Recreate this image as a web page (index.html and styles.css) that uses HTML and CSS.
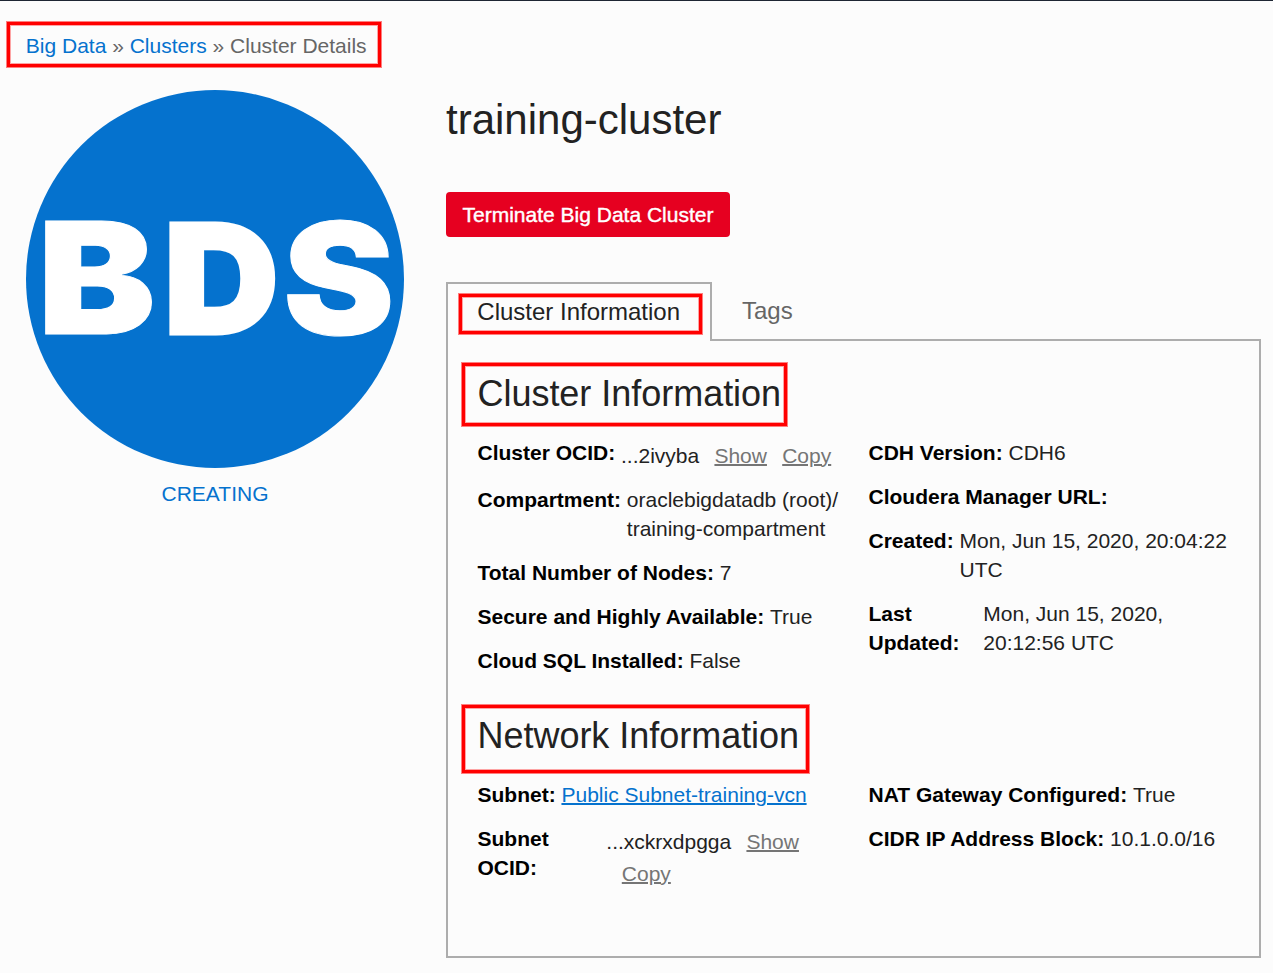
FILE: index.html
```html
<!DOCTYPE html>
<html lang="en">
<head>
<meta charset="utf-8">
<title>Cluster Details</title>
<link rel="stylesheet" href="styles.css">
</head>
<body>
<nav class="breadcrumb"><a href="#">Big Data</a> » <a href="#">Clusters</a> » Cluster Details</nav>
<div class="page">
  <aside class="status">
    <svg class="badge" viewBox="0 0 378 378" width="378" height="378">
      <circle cx="189" cy="189" r="189" fill="#0572ce"/>
      <g class="badge-text">
        <text x="11.5" y="244" textLength="118" lengthAdjust="spacingAndGlyphs">B</text>
        <text x="137.5" y="243.5" textLength="115.5" lengthAdjust="spacingAndGlyphs" class="badge-heavy">D</text>
        <text x="257" y="244.5" textLength="111.5" lengthAdjust="spacingAndGlyphs">S</text>
      </g>
    </svg>
    <div class="state">CREATING</div>
  </aside>
  <main class="details">
    <h1>training-cluster</h1>
    <button class="terminate">Terminate Big Data Cluster</button>
    <div class="tabs">
      <div class="tab active">Cluster Information</div>
      <div class="tab">Tags</div>
    </div>
    <div class="panel">
      <section class="cluster">
        <h2>Cluster Information</h2>
        <div class="columns">
          <dl>
            <div class="row"><dt>Cluster OCID:</dt><dd class="ocid">...2ivyba <a href="#">Show</a> <a href="#">Copy</a></dd></div>
            <div class="row"><dt>Compartment:</dt><dd>oraclebigdatadb (root)/<br>training-compartment</dd></div>
            <div class="row"><dt>Total Number of Nodes:</dt><dd>7</dd></div>
            <div class="row"><dt>Secure and Highly Available:</dt><dd>True</dd></div>
            <div class="row"><dt>Cloud SQL Installed:</dt><dd>False</dd></div>
          </dl>
          <dl>
            <div class="row"><dt>CDH Version:</dt><dd>CDH6</dd></div>
            <div class="row"><dt>Cloudera Manager URL:</dt><dd></dd></div>
            <div class="row"><dt>Created:</dt><dd>Mon, Jun 15, 2020, 20:04:22<br>UTC</dd></div>
            <div class="row"><dt class="updated">Last<br>Updated:</dt><dd>Mon, Jun 15, 2020,<br>20:12:56 UTC</dd></div>
          </dl>
        </div>
      </section>
      <section class="network">
        <h2>Network Information</h2>
        <div class="columns">
          <dl>
            <div class="row"><dt>Subnet:</dt><dd><a class="link" href="#">Public Subnet-training-vcn</a></dd></div>
            <div class="row"><dt class="subnet">Subnet<br>OCID:</dt><dd class="ocid">...xckrxdpgga <a href="#">Show</a><br><a href="#">Copy</a></dd></div>
          </dl>
          <dl>
            <div class="row"><dt>NAT Gateway Configured:</dt><dd>True</dd></div>
            <div class="row"><dt>CIDR IP Address Block:</dt><dd>10.1.0.0/16</dd></div>
          </dl>
        </div>
      </section>
    </div>
  </main>
</div>
<div class="mark mark-path"></div>
<div class="mark mark-tab"></div>
<div class="mark mark-cluster"></div>
<div class="mark mark-network"></div>
</body>
</html>
```
FILE: styles.css
```css
* { box-sizing: border-box; }
body {
  position: relative;
  margin: 0;
  height: 973px;
  overflow: hidden;
  background: #fcfcfc;
  border-top: 1px solid #1e2633;
  color: #222;
  font: 21px/29px "Liberation Sans", Arial, sans-serif;
}
h1, h2, dl, dd { margin: 0; font-weight: 400; }
a { color: #0572ce; text-decoration: none; }
.breadcrumb {
  height: 89px;
  padding: 30px 0 0 25.8px;
  color: #666;
  font-size: 21px;
  white-space: nowrap;
}
.page { display: flex; gap: 42px; padding-left: 26px; }
.status { width: 378px; text-align: center; }
.badge { display: block; }
.badge-text {
  fill: #fff;
  stroke: #fff;
  stroke-width: 1px;
  stroke-linejoin: miter;
  font: 900 156px Inter, "Liberation Sans", sans-serif;
}
.badge-heavy { stroke-width: 3px; font-size: 153px; }
.state { margin-top: 11px; color: #0572ce; font-size: 21px; }
.details { width: 815px; }
h1 { padding-top: 6px; height: 102px; font-size: 42px; line-height: 48px; }
.terminate {
  display: block;
  width: 284px;
  height: 45px;
  padding: 0;
  border: 0;
  border-radius: 4px;
  background: #e60020;
  color: #fff;
  font: 21px/45px "Liberation Sans", Arial, sans-serif;
  -webkit-text-stroke: 0.4px #fff;
}
.tabs { display: flex; margin-top: 45px; height: 57px; font-size: 24px; }
.tab { padding: 14px 0 0 30px; height: 59px; color: #666; }
.tab.active {
  position: relative;
  width: 266px;
  padding: 13px 0 0 29.3px;
  border: 2px solid #adadad;
  border-bottom: 0;
  background: #fcfcfc;
  color: #222;
  white-space: nowrap;
}
.panel { height: 619px; padding: 32px 0 0 29.5px; border: 2px solid #adadad; }
.cluster { height: 342px; }
h2 { margin-bottom: 23px; font-size: 36px; line-height: 42px; letter-spacing: -0.03px; }
.columns { display: grid; grid-template-columns: 391px 1fr; }
.row { display: flex; margin-bottom: 15px; white-space: nowrap; }
dt { margin-right: 5.8px; color: #000; font-weight: 700; }
.updated { width: 109px; }
.subnet { width: 123px; }
.ocid { padding-top: 2px; margin-bottom: -2px; line-height: 32px; }
.ocid a, .link { text-decoration: underline 2px; }
.ocid a { color: #757575; margin-left: 9.4px; }
.ocid br + a { margin-left: 15.5px; }
.mark {
  position: absolute;
  border: 3px solid #f00;
  box-shadow: 0 0 0 1px rgba(255, 0, 0, 0.5), inset 0 0 0 1px rgba(255, 0, 0, 0.35);
}
.mark-path { left: 7px; top: 21px; width: 374px; height: 45px; }
.mark-tab { left: 459px; top: 293px; width: 243px; height: 40px; }
.mark-cluster { left: 462px; top: 362px; width: 325px; height: 63px; }
.mark-network { left: 462px; top: 704px; width: 347px; height: 68px; }
```
